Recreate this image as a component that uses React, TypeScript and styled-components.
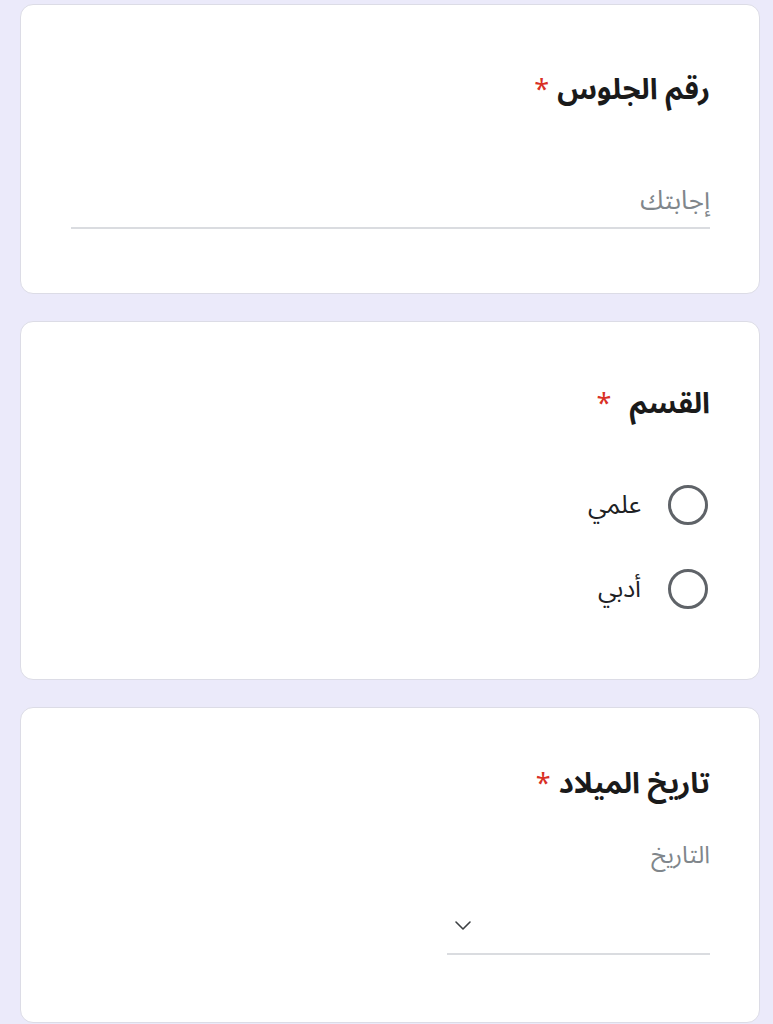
import React from 'react';
import styled, { createGlobalStyle } from 'styled-components';

const Global = createGlobalStyle`
  html, body {
    margin: 0;
    padding: 0;
    background: #ebeafa;
  }
  body {
    font-family: "Noto Sans Arabic", "DejaVu Sans", "Noto Sans", sans-serif;
    color: #202124;
  }
`;

const Page = styled.div`
  direction: rtl;
  display: flex;
  flex-direction: column;
  gap: 27px;
  padding: 4px 13px 0 20px;
  min-height: 1024px;
  box-sizing: border-box;
`;

const Card = styled.section<{ $h: number }>`
  background: #fff;
  border: 1px solid #dcdce6;
  border-radius: 13px;
  height: ${p => p.$h}px;
  box-sizing: border-box;
  padding: 0 49px 0 50px;
  display: flex;
  flex-direction: column;
`;

const Title = styled.h2<{ $top: number }>`
  margin: ${p => p.$top}px 0 0;
  font-size: 29px;
  font-weight: 700;
  line-height: 40px;
  color: #1a1a1a;
`;

const Star = styled.span<{ $gap: number }>`
  color: #d93025;
  margin-right: ${p => p.$gap}px;
  font-weight: 400;
  font-size: 27px;
`;

const TextField = styled.div`
  margin-top: 72px;
  border-bottom: 2px solid #dadce0;
  padding-bottom: 8px;
`;

const Placeholder = styled.div`
  font-size: 26px;
  line-height: 36px;
  color: #80868b;
`;

const Options = styled.div`
  margin-top: 60px;
  display: flex;
  flex-direction: column;
  gap: 44px;
`;

const Option = styled.label`
  display: flex;
  align-items: center;
  gap: 27px;
  font-size: 25px;
  line-height: 40px;
  color: #202124;
`;

const Radio = styled.span`
  width: 40px;
  height: 40px;
  border: 3px solid #5f6368;
  border-radius: 50%;
  box-sizing: border-box;
  flex: none;
  margin-right: 2px;
`;

const DateLabel = styled.div`
  margin-top: 34px;
  font-size: 24px;
  line-height: 34px;
  color: #80868b;
`;

const DateField = styled.div`
  margin-top: 40px;
  width: 263px;
  height: 42px;
  border-bottom: 2px solid #dadce0;
  display: flex;
  align-items: flex-start;
  justify-content: flex-end;
  padding: 2px 6px 0 0;
  padding-left: 6px;
  box-sizing: border-box;
`;

const Chevron = () => (
  <svg width="20" height="20" viewBox="0 0 20 20" fill="none">
    <path d="M3 7l7 7 7-7" stroke="#3c4043" strokeWidth="1.6" strokeLinecap="round" strokeLinejoin="round" />
  </svg>
);

export default function App() {
  return (
    <>
      <Global />
      <Page>
        <Card $h={290}>
          <Title $top={65}>
            رقم الجلوس<Star $gap={8}>*</Star>
          </Title>
          <TextField>
            <Placeholder>إجابتك</Placeholder>
          </TextField>
        </Card>

        <Card $h={359}>
          <Title $top={62}>
            القسم<Star $gap={18}>*</Star>
          </Title>
          <Options>
            <Option>
              <Radio />
              علمي
            </Option>
            <Option>
              <Radio />
              أدبي
            </Option>
          </Options>
        </Card>

        <Card $h={316}>
          <Title $top={56}>
            تاريخ الميلاد<Star $gap={8}>*</Star>
          </Title>
          <DateLabel>التاريخ</DateLabel>
          <DateField>
            <Chevron />
          </DateField>
        </Card>
      </Page>
    </>
  );
}
